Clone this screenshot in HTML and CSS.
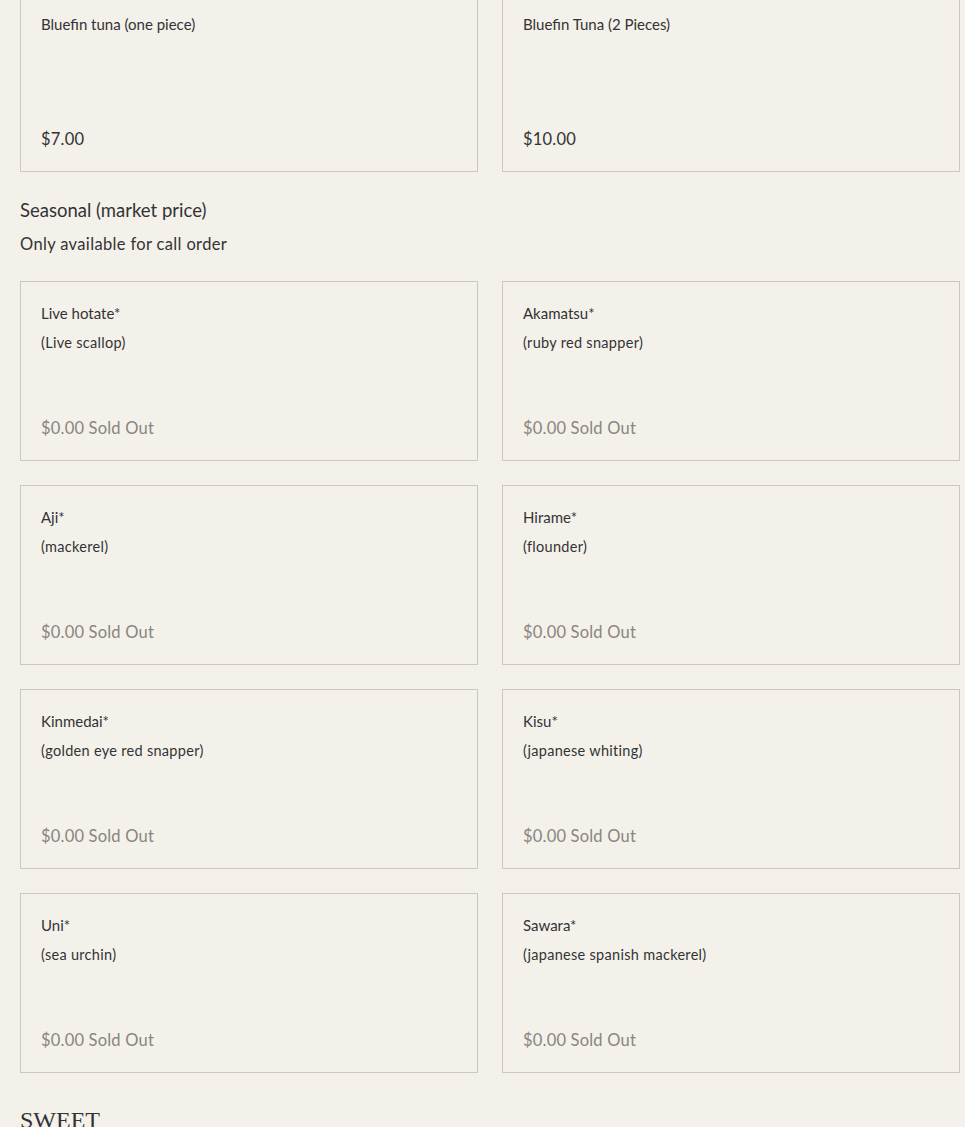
FILE: index.html
```html
<!DOCTYPE html>
<html lang="en">
<head>
<meta charset="utf-8">
<title>Menu</title>
<link rel="stylesheet" href="styles.css">
</head>
<body>
<main class="menu">
  <div class="grid grid-top">
    <div class="card">
      <div class="card-text"><div class="title">Bluefin tuna (one piece)</div></div>
      <div class="price">$7.00</div>
    </div>
    <div class="card">
      <div class="card-text"><div class="title">Bluefin Tuna (2 Pieces)</div></div>
      <div class="price">$10.00</div>
    </div>
  </div>

  <section class="section">
    <h2 class="section-title">Seasonal (market price)</h2>
    <p class="section-desc">Only available for call order</p>
    <div class="grid">
      <div class="card">
        <div class="card-text"><div class="title">Live hotate*</div><div class="desc">(Live scallop)</div></div>
        <div class="price sold">$0.00 Sold Out</div>
      </div>
      <div class="card">
        <div class="card-text"><div class="title">Akamatsu*</div><div class="desc">(ruby red snapper)</div></div>
        <div class="price sold">$0.00 Sold Out</div>
      </div>
      <div class="card">
        <div class="card-text"><div class="title">Aji*</div><div class="desc">(mackerel)</div></div>
        <div class="price sold">$0.00 Sold Out</div>
      </div>
      <div class="card">
        <div class="card-text"><div class="title">Hirame*</div><div class="desc">(flounder)</div></div>
        <div class="price sold">$0.00 Sold Out</div>
      </div>
      <div class="card">
        <div class="card-text"><div class="title">Kinmedai*</div><div class="desc">(golden eye red snapper)</div></div>
        <div class="price sold">$0.00 Sold Out</div>
      </div>
      <div class="card">
        <div class="card-text"><div class="title">Kisu*</div><div class="desc">(japanese whiting)</div></div>
        <div class="price sold">$0.00 Sold Out</div>
      </div>
      <div class="card">
        <div class="card-text"><div class="title">Uni*</div><div class="desc">(sea urchin)</div></div>
        <div class="price sold">$0.00 Sold Out</div>
      </div>
      <div class="card">
        <div class="card-text"><div class="title">Sawara*</div><div class="desc">(japanese spanish mackerel)</div></div>
        <div class="price sold">$0.00 Sold Out</div>
      </div>
    </div>
  </section>

  <h2 class="category">SWEET</h2>
</main>
</body>
</html>
```
FILE: styles.css
```css
html, body {
  margin: 0;
  padding: 0;
  background: #f4f1eb;
}
body {
  color: #333;
  font-family: "Lato", "Open Sans", sans-serif;
  overflow: hidden;
}
.menu {
  width: 940px;
  padding-left: 20px;
  margin-top: -8px;
}
.grid {
  display: grid;
  grid-template-columns: 458px 458px;
  column-gap: 24px;
  row-gap: 24px;
}
.card {
  height: 180px;
  box-sizing: border-box;
  border: 1px solid #cdc9c1;
  padding: 22px 20px 22px 20px;
  display: flex;
  flex-direction: column;
  justify-content: space-between;
}
.title {
  font-family: "Lato", sans-serif;
  font-size: 15px;
  line-height: 18px;
  color: #333;
}
.desc {
  margin-top: 11px;
  font-size: 14.5px;
  letter-spacing: 0.3px;
  line-height: 20px;
  color: #333;
}
.price {
  font-size: 16.5px;
  letter-spacing: 0.2px;
  line-height: 20px;
  color: #333;
}
.price.sold {
  color: #888580;
}
.section {
  margin-top: 26px;
}
.section-title {
  margin: 0;
  font-weight: 400;
  font-size: 18.5px;
  line-height: 24px;
  color: #333;
}
.section-desc {
  margin: 12px 0 27px 0;
  font-size: 16.5px;
  letter-spacing: 0.35px;
  line-height: 20px;
  color: #333;
}
.category {
  margin: 32px 0 0 0;
  font-family: "Liberation Serif", serif;
  font-weight: 400;
  font-size: 24px;
  line-height: 30px;
  color: #333;
}
```
